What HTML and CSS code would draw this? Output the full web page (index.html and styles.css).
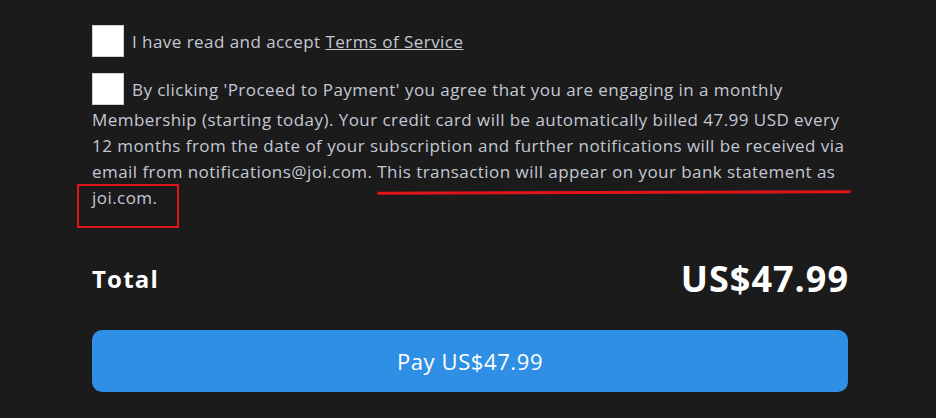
FILE: index.html
```html
<!DOCTYPE html>
<html>
<head>
<meta charset="utf-8">
<link rel="stylesheet" href="styles.css">
</head>
<body>
<div class="page">
  <div class="terms">
    <p class="check-line"><span class="box"></span>I have read and accept <a class="link" href="#">Terms of Service</a></p>
    <p class="check-line para"><span class="box"></span>By clicking 'Proceed to Payment' you agree that you are engaging in a monthly Membership (starting today). Your credit card will be automatically billed 47.99 USD every 12 months from the date of your subscription and further notifications will be received via email from notifications@joi.com. This transaction will appear on your bank statement as joi.com.</p>
    <span class="mark-line"></span>
    <span class="mark-box"></span>
  </div>
  <div class="total">
    <span class="total-label">Total</span>
    <span class="total-amount">US$47.99</span>
  </div>
  <button class="pay">Pay US$47.99</button>
</div>
</body>
</html>
```

FILE: styles.css
```css
html, body {
  margin: 0;
  background: #1b1b1b;
}
.page {
  width: 756px;
  margin-left: 92px;
  padding-top: 27px;
  font-family: "Open Sans", "Liberation Sans", sans-serif;
  color: #c4c8d4;
}
.terms {
  position: relative;
}
.check-line {
  margin: 0;
  font-size: 17px;
  letter-spacing: 0.45px;
  line-height: 26px;
}
.para {
  margin-top: 16px;
}
.box {
  display: inline-block;
  width: 30px;
  height: 30px;
  background: #fff;
  border: 1px solid #cfd2d8;
  vertical-align: middle;
  margin-right: 8px;
  position: relative;
  top: -2px;
}
.link {
  color: #c4c8d4;
  text-decoration: underline;
}
.mark-line {
  position: absolute;
  left: 285px;
  top: 164px;
  width: 474px;
  height: 3px;
  background: #e0141a;
  border-radius: 2px;
  transform: rotate(-0.2deg);
}
.mark-box {
  position: absolute;
  left: -15px;
  top: 157px;
  width: 98px;
  height: 40px;
  border: 2px solid #e0141a;
}
.total {
  display: flex;
  justify-content: space-between;
  align-items: center;
  margin-top: 43px;
  color: #fff;
  font-weight: 700;
}
.total-label {
  font-size: 24px;
  letter-spacing: 1.2px;
}
.total-amount {
  font-size: 36px;
  letter-spacing: 1px;
  margin-right: -1px;
}
.pay {
  display: block;
  width: 756px;
  height: 62px;
  margin-top: 27px;
  border: none;
  border-radius: 10px;
  background: #2e8fe5;
  color: #fff;
  font-family: "Open Sans", "Liberation Sans", sans-serif;
  font-size: 22px;
  letter-spacing: 0.6px;
}
```
